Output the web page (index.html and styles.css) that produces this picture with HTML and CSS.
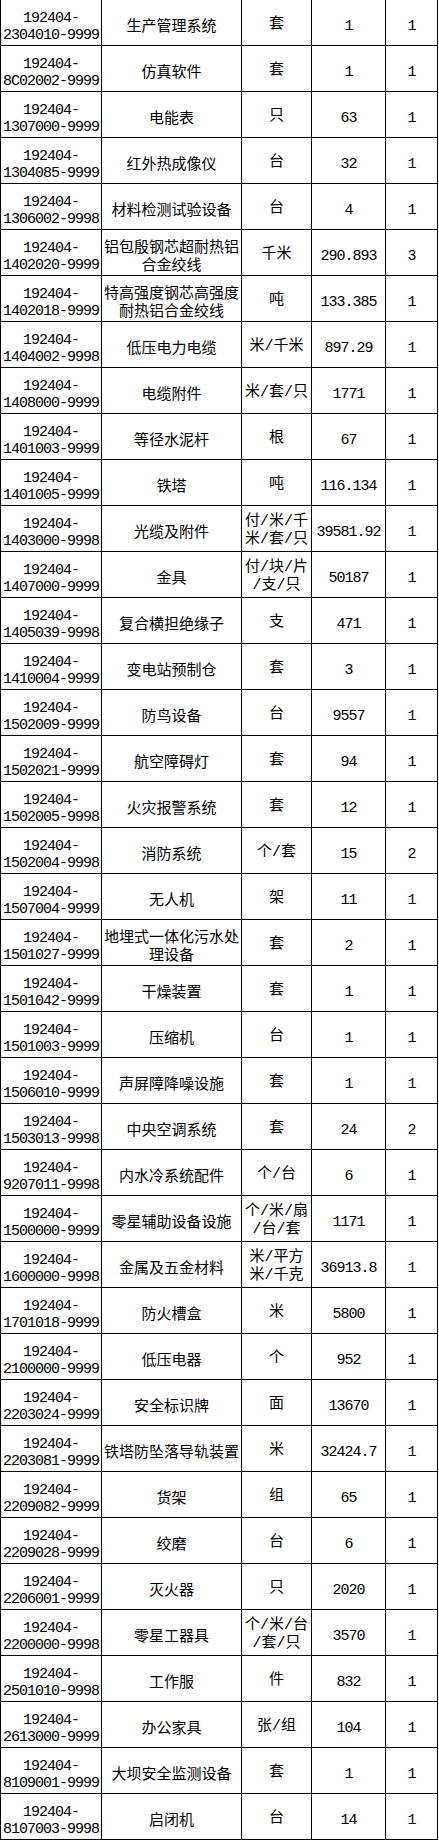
FILE: index.html
```html
<!DOCTYPE html>
<html lang="zh-CN">
<head>
<meta charset="utf-8">
<title>物资清单</title>
<link rel="stylesheet" href="styles.css">
</head>
<body>
<div class="sheet">
<div class="code">192404-<br>2304010-9999</div><div class="name">生产管理系统</div><div class="unit">套</div><div class="num">1</div><div class="num">1</div>
<div class="code">192404-<br>8C02002-9999</div><div class="name">仿真软件</div><div class="unit">套</div><div class="num">1</div><div class="num">1</div>
<div class="code">192404-<br>1307000-9999</div><div class="name">电能表</div><div class="unit">只</div><div class="num">63</div><div class="num">1</div>
<div class="code">192404-<br>1304085-9999</div><div class="name">红外热成像仪</div><div class="unit">台</div><div class="num">32</div><div class="num">1</div>
<div class="code">192404-<br>1306002-9998</div><div class="name">材料检测试验设备</div><div class="unit">台</div><div class="num">4</div><div class="num">1</div>
<div class="code">192404-<br>1402020-9999</div><div class="name">铝包殷钢芯超耐热铝<br>合金绞线</div><div class="unit">千米</div><div class="num">290.893</div><div class="num">3</div>
<div class="code">192404-<br>1402018-9999</div><div class="name">特高强度钢芯高强度<br>耐热铝合金绞线</div><div class="unit">吨</div><div class="num">133.385</div><div class="num">1</div>
<div class="code">192404-<br>1404002-9998</div><div class="name">低压电力电缆</div><div class="unit">米/千米</div><div class="num">897.29</div><div class="num">1</div>
<div class="code">192404-<br>1408000-9999</div><div class="name">电缆附件</div><div class="unit">米/套/只</div><div class="num">1771</div><div class="num">1</div>
<div class="code">192404-<br>1401003-9999</div><div class="name">等径水泥杆</div><div class="unit">根</div><div class="num">67</div><div class="num">1</div>
<div class="code">192404-<br>1401005-9999</div><div class="name">铁塔</div><div class="unit">吨</div><div class="num">116.134</div><div class="num">1</div>
<div class="code">192404-<br>1403000-9998</div><div class="name">光缆及附件</div><div class="unit">付/米/千<br>米/套/只</div><div class="num">39581.92</div><div class="num">1</div>
<div class="code">192404-<br>1407000-9999</div><div class="name">金具</div><div class="unit">付/块/片<br>/支/只</div><div class="num">50187</div><div class="num">1</div>
<div class="code">192404-<br>1405039-9998</div><div class="name">复合横担绝缘子</div><div class="unit">支</div><div class="num">471</div><div class="num">1</div>
<div class="code">192404-<br>1410004-9999</div><div class="name">变电站预制仓</div><div class="unit">套</div><div class="num">3</div><div class="num">1</div>
<div class="code">192404-<br>1502009-9999</div><div class="name">防鸟设备</div><div class="unit">台</div><div class="num">9557</div><div class="num">1</div>
<div class="code">192404-<br>1502021-9999</div><div class="name">航空障碍灯</div><div class="unit">套</div><div class="num">94</div><div class="num">1</div>
<div class="code">192404-<br>1502005-9998</div><div class="name">火灾报警系统</div><div class="unit">套</div><div class="num">12</div><div class="num">1</div>
<div class="code">192404-<br>1502004-9998</div><div class="name">消防系统</div><div class="unit">个/套</div><div class="num">15</div><div class="num">2</div>
<div class="code">192404-<br>1507004-9999</div><div class="name">无人机</div><div class="unit">架</div><div class="num">11</div><div class="num">1</div>
<div class="code">192404-<br>1501027-9999</div><div class="name">地埋式一体化污水处<br>理设备</div><div class="unit">套</div><div class="num">2</div><div class="num">1</div>
<div class="code">192404-<br>1501042-9999</div><div class="name">干燥装置</div><div class="unit">套</div><div class="num">1</div><div class="num">1</div>
<div class="code">192404-<br>1501003-9999</div><div class="name">压缩机</div><div class="unit">台</div><div class="num">1</div><div class="num">1</div>
<div class="code">192404-<br>1506010-9999</div><div class="name">声屏障降噪设施</div><div class="unit">套</div><div class="num">1</div><div class="num">1</div>
<div class="code">192404-<br>1503013-9998</div><div class="name">中央空调系统</div><div class="unit">套</div><div class="num">24</div><div class="num">2</div>
<div class="code">192404-<br>9207011-9998</div><div class="name">内水冷系统配件</div><div class="unit">个/台</div><div class="num">6</div><div class="num">1</div>
<div class="code">192404-<br>1500000-9999</div><div class="name">零星辅助设备设施</div><div class="unit">个/米/扇<br>/台/套</div><div class="num">1171</div><div class="num">1</div>
<div class="code">192404-<br>1600000-9998</div><div class="name">金属及五金材料</div><div class="unit">米/平方<br>米/千克</div><div class="num">36913.8</div><div class="num">1</div>
<div class="code">192404-<br>1701018-9999</div><div class="name">防火槽盒</div><div class="unit">米</div><div class="num">5800</div><div class="num">1</div>
<div class="code">192404-<br>2100000-9999</div><div class="name">低压电器</div><div class="unit">个</div><div class="num">952</div><div class="num">1</div>
<div class="code">192404-<br>2203024-9999</div><div class="name">安全标识牌</div><div class="unit">面</div><div class="num">13670</div><div class="num">1</div>
<div class="code">192404-<br>2203081-9999</div><div class="name">铁塔防坠落导轨装置</div><div class="unit">米</div><div class="num">32424.7</div><div class="num">1</div>
<div class="code">192404-<br>2209082-9999</div><div class="name">货架</div><div class="unit">组</div><div class="num">65</div><div class="num">1</div>
<div class="code">192404-<br>2209028-9999</div><div class="name">绞磨</div><div class="unit">台</div><div class="num">6</div><div class="num">1</div>
<div class="code">192404-<br>2206001-9999</div><div class="name">灭火器</div><div class="unit">只</div><div class="num">2020</div><div class="num">1</div>
<div class="code">192404-<br>2200000-9998</div><div class="name">零星工器具</div><div class="unit">个/米/台<br>/套/只</div><div class="num">3570</div><div class="num">1</div>
<div class="code">192404-<br>2501010-9998</div><div class="name">工作服</div><div class="unit">件</div><div class="num">832</div><div class="num">1</div>
<div class="code">192404-<br>2613000-9999</div><div class="name">办公家具</div><div class="unit">张/组</div><div class="num">104</div><div class="num">1</div>
<div class="code">192404-<br>8109001-9999</div><div class="name">大坝安全监测设备</div><div class="unit">套</div><div class="num">1</div><div class="num">1</div>
<div class="code">192404-<br>8107003-9998</div><div class="name">启闭机</div><div class="unit">台</div><div class="num">14</div><div class="num">1</div>
</div>
</body>
</html>
```
FILE: styles.css
```css
html, body {
  margin: 0;
  padding: 0;
  background: #ffffff;
}

.sheet {
  display: grid;
  grid-template-columns: 100px 139px 69px 73px 51px;
  grid-auto-rows: 45px;
  gap: 1px;
  padding: 0 1px 1px 1px;
  background: #000000;
  width: max-content;
}

.sheet > div {
  background: #ffffff;
  color: #000000;
  display: flex;
  align-items: center;
  justify-content: center;
  text-align: center;
  white-space: nowrap;
}

.code,
.num {
  font-family: "Liberation Mono", "DejaVu Sans Mono", monospace;
  font-size: 15px;
  letter-spacing: -1px;
  line-height: 17px;
  padding-top: 8px;
}

.name {
  font-family: "Noto Sans CJK SC", "Noto Sans", sans-serif;
  font-size: 15px;
  line-height: 18px;
  padding-top: 4px;
}

.unit {
  font-family: "Liberation Mono", "Noto Sans CJK SC", monospace;
  font-size: 15px;
  line-height: 18px;
  padding-top: 4px;
}
```
